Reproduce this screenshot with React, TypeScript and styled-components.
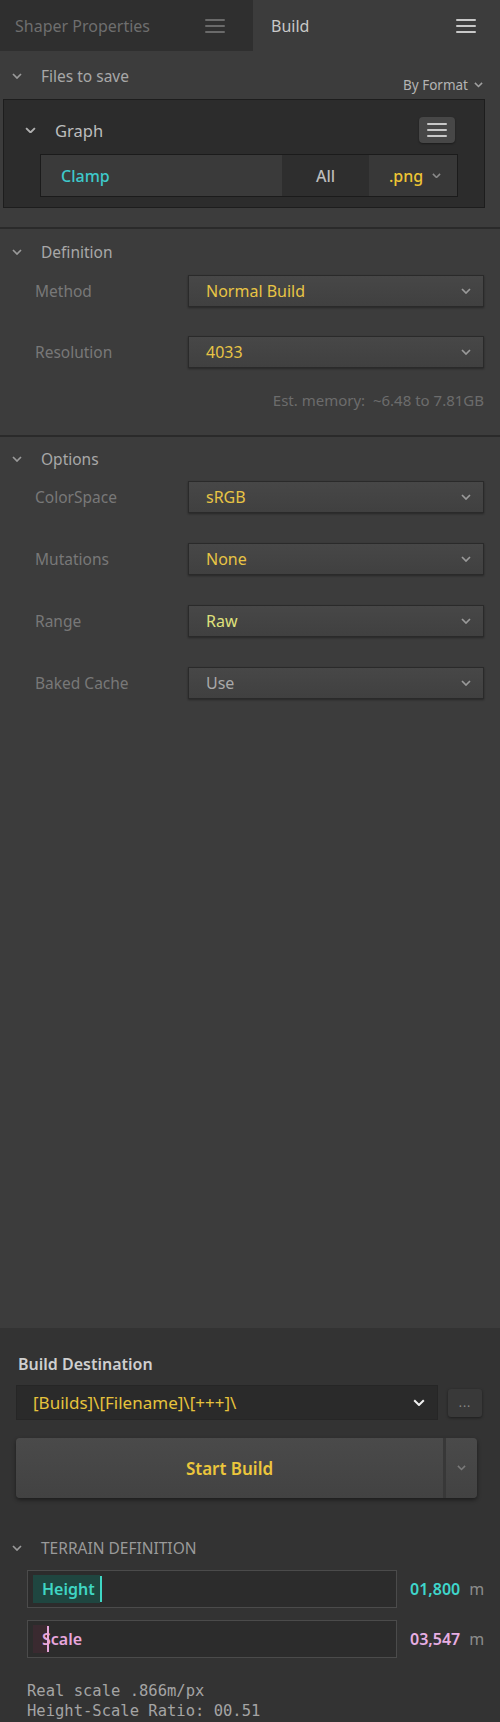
import React from 'react';
import styled, { createGlobalStyle } from 'styled-components';

const GlobalStyle = createGlobalStyle`
    html, body {
        margin: 0;
        padding: 0;
        background: #3c3c3c;
    }
    * {
        box-sizing: border-box;
    }
`;

const Page = styled.div`
    display: flex;
    flex-direction: column;
    width: 500px;
    height: 1722px;
    background: #3c3c3c;
    font-family: 'Noto Sans', 'Open Sans', sans-serif;
    font-size: 15px;
    color: #b8b8b8;
    overflow: hidden;
`;

const TabBar = styled.div`
    display: flex;
    height: 51px;
    flex-shrink: 0;
`;

const Tab = styled.div<{ $active?: boolean }>`
    display: flex;
    align-items: center;
    justify-content: space-between;
    flex: ${(p) => (p.$active ? '1' : '0 0 253px')};
    padding: 0 ${(p) => (p.$active ? '24px' : '28px')} 0 ${(p) => (p.$active ? '18px' : '15px')};
    background: ${(p) => (p.$active ? '#3c3c3c' : '#2f2f2f')};
    color: ${(p) => (p.$active ? '#c8c8c8' : '#6e6e6e')};
    font-size: 16px;
`;

const Burger = styled.span<{ $light?: boolean }>`
    display: flex;
    flex-direction: column;
    gap: 4px;
    width: 20px;

    i {
        display: block;
        height: 2px;
        background: ${(p) => (p.$light ? '#c8c8c8' : '#6a6a6a')};
        border-radius: 1px;
    }
`;

const FilesHeader = styled.div`
    display: flex;
    justify-content: space-between;
    height: 48px;
    padding: 0 17px 0 12px;
    flex-shrink: 0;
`;

const SectionTitle = styled.div<{ $upper?: boolean }>`
    display: flex;
    align-items: center;
    gap: 19px;
    color: ${(p) => (p.$upper ? '#9a9a9a' : '#a8a8a8')};
    font-size: 15.5px;
    text-transform: ${(p) => (p.$upper ? 'uppercase' : 'none')};
`;

const FilesTitle = styled(SectionTitle)`
    height: 24px;
    margin-top: 13px;
`;

const ByFormat = styled.div`
    display: flex;
    align-items: center;
    gap: 6px;
    margin-top: 24px;
    height: 20px;
    font-size: 13.5px;
    color: #b4b4b4;
`;

const GraphBox = styled.div`
    display: flex;
    flex-direction: column;
    height: 109px;
    margin: 0 15px 0 3px;
    background: #2c2c2c;
    border: 1px solid #1d1d1d;
    flex-shrink: 0;
`;

const GraphHeader = styled.div`
    display: flex;
    align-items: center;
    justify-content: space-between;
    height: 54px;
    padding: 6px 29px 0 21px;
`;

const GraphTitle = styled.div`
    display: flex;
    align-items: center;
    gap: 19px;
    color: #bdbdbd;
    font-size: 16.5px;
`;

const IconButton = styled.div`
    display: flex;
    align-items: center;
    justify-content: center;
    width: 36px;
    height: 26px;
    background: #474747;
    border-radius: 4px;
    box-shadow: 0 1px 2px rgba(0, 0, 0, 0.4);
`;

const FileRow = styled.div`
    display: flex;
    height: 43px;
    margin: 0 26px 0 36px;
    border: 1px solid #1b1b1b;
`;

const FileCell = styled.div<{ $bg: string; $w?: number; $color: string; $center?: boolean }>`
    display: flex;
    align-items: center;
    justify-content: ${(p) => (p.$center ? 'center' : 'space-between')};
    flex: ${(p) => (p.$w ? `0 0 ${p.$w}px` : '1')};
    padding: 0 ${(p) => (p.$center ? '0' : '16px')} 0 ${(p) => (p.$center ? '0' : '20px')};
    background: ${(p) => p.$bg};
    color: ${(p) => p.$color};
    font-size: 16px;
    font-weight: 500;
`;

const Divider = styled.div<{ $top: number }>`
    height: 2px;
    margin-top: ${(p) => p.$top}px;
    background: #2a2a2a;
    flex-shrink: 0;
`;

const SectionHeader = styled.div<{ $h: number }>`
    display: flex;
    align-items: center;
    height: ${(p) => p.$h}px;
    padding-left: 12px;
    flex-shrink: 0;
`;

const FieldList = styled.div<{ $gap: number }>`
    display: flex;
    flex-direction: column;
    gap: ${(p) => p.$gap}px;
    padding: 0 16px 0 35px;
    flex-shrink: 0;
`;

const FieldRow = styled.div`
    display: flex;
    align-items: center;
    height: 32px;
`;

const FieldLabel = styled.div`
    width: 153px;
    color: #787878;
    font-size: 15.5px;
`;

const Dropdown = styled.div<{ $color: string }>`
    display: flex;
    align-items: center;
    justify-content: space-between;
    flex: 1;
    height: 32px;
    padding: 0 12px 0 17px;
    background: linear-gradient(#474747, #404040);
    border: 1px solid #2a2a2a;
    box-shadow: 0 1px 2px rgba(0, 0, 0, 0.35);
    color: ${(p) => p.$color};
    font-size: 16px;
`;

const Memory = styled.div`
    margin-top: 22px;
    padding-right: 16px;
    height: 20px;
    line-height: 20px;
    text-align: right;
    color: #6c6c6c;
    font-size: 15px;
    flex-shrink: 0;
`;

const Spacer = styled.div`
    flex: 1;
`;

const BottomPanel = styled.div`
    display: flex;
    flex-direction: column;
    height: 394px;
    background: #333333;
    flex-shrink: 0;
`;

const DestLabel = styled.div`
    margin: 26px 0 0 18px;
    height: 20px;
    line-height: 20px;
    color: #cfcfcf;
    font-size: 16px;
    font-weight: 600;
`;

const DestRow = styled.div`
    display: flex;
    align-items: center;
    gap: 10px;
    margin: 11px 18px 0 16px;
    height: 35px;
`;

const DestSelect = styled.div`
    display: flex;
    align-items: center;
    justify-content: space-between;
    flex: 1;
    height: 35px;
    padding: 0 12px 0 16px;
    background: #2a2a2a;
    border: 1px solid #262626;
    color: #e6c23c;
    font-size: 17px;
`;

const MoreButton = styled.div`
    display: flex;
    align-items: center;
    justify-content: center;
    width: 34px;
    height: 28px;
    background: #393939;
    border-radius: 3px;
    box-shadow: 0 1px 3px rgba(0, 0, 0, 0.45);
    color: #8a8a8a;
    font-size: 12px;
    letter-spacing: 1px;
`;

const BuildButton = styled.div`
    display: flex;
    height: 60px;
    margin: 18px 23px 0 16px;
    border-radius: 4px;
    background: linear-gradient(#4a4a4a, #424242);
    box-shadow: 0 2px 4px rgba(0, 0, 0, 0.45);
    overflow: hidden;
`;

const BuildMain = styled.div`
    display: flex;
    align-items: center;
    justify-content: center;
    flex: 1;
    border-right: 3px solid #383838;
    color: #ecc63c;
    font-size: 17px;
    font-weight: 600;
`;

const BuildArrow = styled.div`
    display: flex;
    align-items: center;
    justify-content: center;
    width: 31px;
`;

const TerrainHeader = styled(SectionHeader)`
    margin-top: 28px;
`;

const InputList = styled.div`
    display: flex;
    flex-direction: column;
    gap: 12px;
    padding: 0 14px 0 27px;
`;

const InputRow = styled.div`
    display: flex;
    align-items: center;
    height: 38px;
`;

const TextBox = styled.div`
    display: flex;
    align-items: center;
    width: 370px;
    height: 38px;
    padding: 0 5px;
    background: #2c2c2c;
    border: 1px solid #4b4b4b;
`;

const Tag = styled.div<{ $bg: string; $color: string; $w: number }>`
    display: flex;
    align-items: center;
    width: ${(p) => p.$w}px;
    height: 28px;
    padding-left: 9px;
    background: ${(p) => p.$bg};
    color: ${(p) => p.$color};
    font-size: 16px;
    font-weight: 600;
    white-space: nowrap;
`;

const Caret = styled.span<{ $color: string; $over?: boolean }>`
    display: inline-block;
    flex-shrink: 0;
    width: 2px;
    height: 26px;
    margin-right: ${(p) => (p.$over ? '-7px' : '0')};
    margin-left: ${(p) => (p.$over ? '5px' : '0')};
    background: ${(p) => p.$color};
`;

const Value = styled.div<{ $color: string }>`
    margin-left: 13px;
    color: ${(p) => p.$color};
    font-size: 16px;
    font-weight: 600;
`;

const Unit = styled.span`
    margin-left: 9px;
    color: #8c8c8c;
    font-size: 16px;
`;

const MonoInfo = styled.pre`
    margin: 23px 0 0 27px;
    font-family: 'DejaVu Sans Mono', 'Liberation Mono', monospace;
    font-size: 15.5px;
    line-height: 20px;
    color: #a4a4a4;
`;

function Chevron({ color = '#9a9a9a', w = 10 }: { color?: string; w?: number }) {
    return (
        <svg width={w} height={w * 0.6} viewBox="0 0 10 6">
            <polyline points="1,1 5,5 9,1" fill="none" stroke={color} strokeWidth="1.7" />
        </svg>
    );
}

function Lines({ light }: { light?: boolean }) {
    return (
        <Burger $light={light}>
            <i />
            <i />
            <i />
        </Burger>
    );
}

const definition = [
    { label: 'Method', value: 'Normal Build', color: '#e8c445' },
    { label: 'Resolution', value: '4033', color: '#e8c445' },
];

const options = [
    { label: 'ColorSpace', value: 'sRGB', color: '#e8c445' },
    { label: 'Mutations', value: 'None', color: '#e8c445' },
    { label: 'Range', value: 'Raw', color: '#dfe07c' },
    { label: 'Baked Cache', value: 'Use', color: '#a9a9a9' },
];

export default function App() {
    return (
        <Page>
            <GlobalStyle />
            <TabBar>
                <Tab>
                    Shaper Properties
                    <Lines />
                </Tab>
                <Tab $active>
                    Build
                    <Lines light />
                </Tab>
            </TabBar>

            <FilesHeader>
                <FilesTitle>
                    <Chevron />
                    Files to save
                </FilesTitle>
                <ByFormat>
                    By Format
                    <Chevron w={9} color="#a0a0a0" />
                </ByFormat>
            </FilesHeader>

            <GraphBox>
                <GraphHeader>
                    <GraphTitle>
                        <Chevron color="#b0b0b0" w={11} />
                        Graph
                    </GraphTitle>
                    <IconButton>
                        <Lines light />
                    </IconButton>
                </GraphHeader>
                <FileRow>
                    <FileCell $bg="#3a3a3a" $color="#3ec9cb">Clamp</FileCell>
                    <FileCell $bg="#2e2e2e" $w={87} $color="#bcbcbc" $center>All</FileCell>
                    <FileCell $bg="#383838" $w={88} $color="#edc535">
                        .png
                        <Chevron w={9} color="#8a8a8a" />
                    </FileCell>
                </FileRow>
            </GraphBox>

            <Divider $top={19} />
            <SectionHeader $h={46}>
                <SectionTitle>
                    <Chevron />
                    Definition
                </SectionTitle>
            </SectionHeader>
            <FieldList $gap={29}>
                {definition.map((f) => (
                    <FieldRow key={f.label}>
                        <FieldLabel>{f.label}</FieldLabel>
                        <Dropdown $color={f.color}>
                            {f.value}
                            <Chevron color="#9a9a9a" />
                        </Dropdown>
                    </FieldRow>
                ))}
            </FieldList>
            <Memory>Est. memory:&nbsp; ~6.48 to 7.81GB</Memory>

            <Divider $top={25} />
            <SectionHeader $h={44}>
                <SectionTitle>
                    <Chevron />
                    Options
                </SectionTitle>
            </SectionHeader>
            <FieldList $gap={30}>
                {options.map((f) => (
                    <FieldRow key={f.label}>
                        <FieldLabel>{f.label}</FieldLabel>
                        <Dropdown $color={f.color}>
                            {f.value}
                            <Chevron color="#9a9a9a" />
                        </Dropdown>
                    </FieldRow>
                ))}
            </FieldList>

            <Spacer />

            <BottomPanel>
                <DestLabel>Build Destination</DestLabel>
                <DestRow>
                    <DestSelect>
                        [Builds]\[Filename]\[+++]\
                        <Chevron color="#f0f0f0" w={12} />
                    </DestSelect>
                    <MoreButton>...</MoreButton>
                </DestRow>
                <BuildButton>
                    <BuildMain>Start Build</BuildMain>
                    <BuildArrow>
                        <Chevron color="#7a7a7a" w={9} />
                    </BuildArrow>
                </BuildButton>

                <TerrainHeader $h={44}>
                    <SectionTitle $upper>
                        <Chevron />
                        Terrain Definition
                    </SectionTitle>
                </TerrainHeader>
                <InputList>
                    <InputRow>
                        <TextBox>
                            <Tag $bg="#1f4640" $color="#3fd6c4" $w={67}>Height</Tag>
                            <Caret $color="#3fd6c4" />
                        </TextBox>
                        <Value $color="#3fd6cb">01,800</Value>
                        <Unit>m</Unit>
                    </InputRow>
                    <InputRow>
                        <TextBox>
                            <Tag $bg="#3a2a30" $color="#e7a6dc" $w={15}>
                                <Caret $color="#e7a6dc" $over />
                                Scale
                            </Tag>
                        </TextBox>
                        <Value $color="#e7aee2">03,547</Value>
                        <Unit>m</Unit>
                    </InputRow>
                </InputList>
                <MonoInfo>
                    {'Real scale .866m/px\nHeight-Scale Ratio: 00.51'}
                </MonoInfo>
            </BottomPanel>
        </Page>
    );
}
